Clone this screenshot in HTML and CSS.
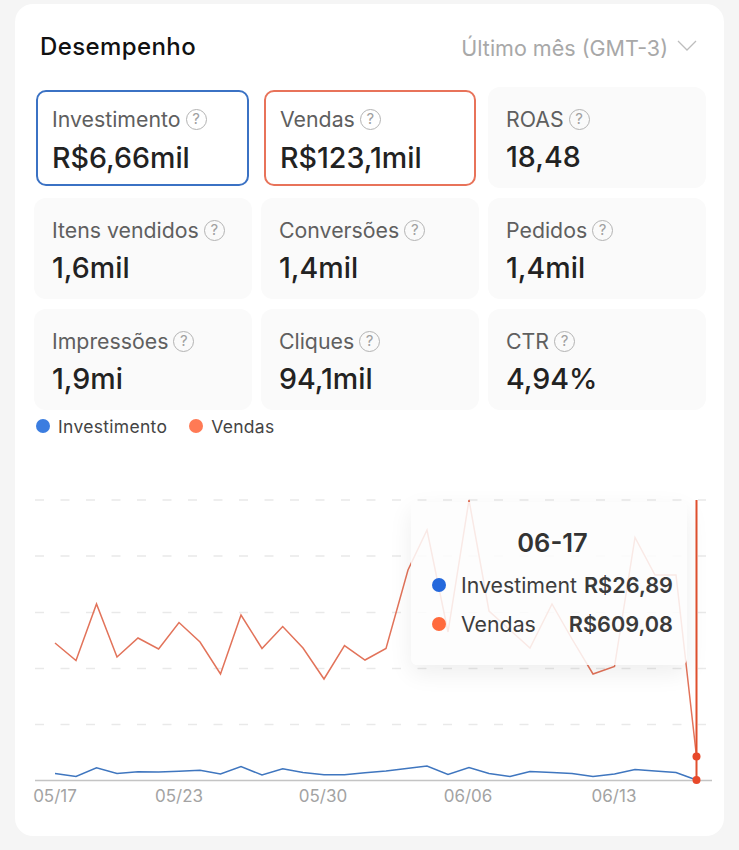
FILE: index.html
```html
<!DOCTYPE html>
<html lang="pt-BR">
<head>
    <meta charset="UTF-8">
    <meta name="viewport" content="width=device-width, initial-scale=1.0">
    <title>Desempenho</title>
    <link rel="stylesheet" href="styles.css">
</head>
<body>
    <main class="card">
        <header class="card-header">
            <h1 class="card-title">Desempenho</h1>
            <div class="range">
                <span>Último mês (GMT-3)</span>
                <svg class="chevron" width="20" height="11" viewBox="0 0 20 11"><path d="M1 1l9 9 9-9"/></svg>
            </div>
        </header>

        <!-- Metric tiles -->
        <section class="metrics">
            <div class="metric metric-blue">
                <div class="metric-label">Investimento <span class="help">?</span></div>
                <div class="metric-value">R$6,66mil</div>
            </div>
            <div class="metric metric-orange">
                <div class="metric-label">Vendas <span class="help">?</span></div>
                <div class="metric-value">R$123,1mil</div>
            </div>
            <div class="metric">
                <div class="metric-label">ROAS <span class="help">?</span></div>
                <div class="metric-value">18,48</div>
            </div>
            <div class="metric">
                <div class="metric-label">Itens vendidos <span class="help">?</span></div>
                <div class="metric-value">1,6mil</div>
            </div>
            <div class="metric">
                <div class="metric-label">Conversões <span class="help">?</span></div>
                <div class="metric-value">1,4mil</div>
            </div>
            <div class="metric">
                <div class="metric-label">Pedidos <span class="help">?</span></div>
                <div class="metric-value">1,4mil</div>
            </div>
            <div class="metric">
                <div class="metric-label">Impressões <span class="help">?</span></div>
                <div class="metric-value">1,9mi</div>
            </div>
            <div class="metric">
                <div class="metric-label">Cliques <span class="help">?</span></div>
                <div class="metric-value">94,1mil</div>
            </div>
            <div class="metric">
                <div class="metric-label">CTR <span class="help">?</span></div>
                <div class="metric-value">4,94%</div>
            </div>
        </section>

        <div class="legend">
            <span class="legend-item"><i class="dot dot-blue"></i>Investimento</span>
            <span class="legend-item"><i class="dot dot-orange"></i>Vendas</span>
        </div>

        <!-- Chart -->
        <div class="chart">
            <svg class="chart-svg" width="680" height="310" viewBox="34 490 680 310">
                <g class="grid">
                    <line x1="35" x2="706" y1="500" y2="500"/>
                    <line x1="35" x2="706" y1="556" y2="556"/>
                    <line x1="35" x2="706" y1="612.5" y2="612.5"/>
                    <line x1="35" x2="706" y1="668.5" y2="668.5"/>
                    <line x1="35" x2="706" y1="724.5" y2="724.5"/>
                </g>
                <line class="axis" x1="35" x2="712" y1="780.5" y2="780.5"/>
                <polyline class="line-orange" points="55,643 76,660.5 96.5,604 117,657 138,638 158.6,649 179,622.5 200,642 220.5,674 241,615 262,648.5 282.7,626.5 303,648 324,679 344.5,645.6 365,660 386,648.5 408,570 427,530 448,632 469,500 489,611 510,630 530,648 552,604 572,639 593,674 614.5,666.5 635,537.5 655,575 676,575 696.5,756.5"/>
                <polyline class="line-blue" points="55,773.5 76,776.5 96.5,767.7 117,773.5 138,771.7 158.6,772 179,771.3 200,770.3 220.5,774 241,766.5 262,775 282.7,768.7 303,772.5 324,774.7 344.5,774.7 365,772.7 386,771 406.5,768.5 427,766 448,774.5 469,767.5 489,773.5 510,776.5 530,771.5 552,772.5 572,773.5 593,776.5 614.5,774 635,769.5 655,771 676,772.5 696.5,780"/>
                <line class="cursor" x1="696.5" x2="696.5" y1="500" y2="780"/>
                <circle class="cursor-dot" cx="696.5" cy="756.5" r="4"/>
                <circle class="cursor-dot" cx="696.5" cy="780" r="4"/>
                <g class="ticks">
                    <text x="55" y="801.5">05/17</text>
                    <text x="179" y="801.5">05/23</text>
                    <text x="323" y="801.5">05/30</text>
                    <text x="468" y="801.5">06/06</text>
                    <text x="614" y="801.5">06/13</text>
                </g>
            </svg>

            <div class="tooltip">
                <div class="tooltip-title">06-17</div>
                <div class="tooltip-row">
                    <i class="dot dot-tip-blue"></i>
                    <span class="tooltip-name">Investiment</span>
                    <span class="tooltip-value">R$26,89</span>
                </div>
                <div class="tooltip-row">
                    <i class="dot dot-tip-orange"></i>
                    <span class="tooltip-name">Vendas</span>
                    <span class="tooltip-value">R$609,08</span>
                </div>
            </div>
        </div>
    </main>
</body>
</html>
```

FILE: styles.css
```css
body {
    font-family: Inter, "Liberation Sans", sans-serif;
    margin: 0;
    padding: 4px 15px 14px;
    background-color: #f5f5f5;
}
.card {
    height: 832px;
    box-sizing: border-box;
    padding: 0 18px 0 19px;
    background-color: #fff;
    border-radius: 18px;
}
.card-header {
    display: flex;
    justify-content: space-between;
    align-items: center;
    height: 83px;
    padding: 0 9px 0 6px;
}
.card-title {
    margin: 2px 0 0;
    font-size: 24px;
    font-weight: 500;
    letter-spacing: 0.4px;
    color: #111;
}
.range {
    display: flex;
    align-items: center;
    gap: 9px;
    padding-top: 5px;
    font-size: 21.5px;
    color: #a8a8a8;
}
.chevron {
    margin-top: -6px;
}
.chevron path {
    fill: none;
    stroke: #bdbdbd;
    stroke-width: 1.3;
}
/* Metric tiles */
.metrics {
    display: grid;
    grid-template-columns: repeat(3, 218px);
    grid-auto-rows: 101px;
    column-gap: 9px;
    row-gap: 10px;
}
.metric {
    box-sizing: border-box;
    padding: 19px 18px 0;
    background-color: #fafafa;
    border-radius: 12px;
}
.metric-blue,
.metric-orange {
    padding: 14px 14px 0;
    background-color: #fff;
    border: 2px solid #3b72c4;
    border-radius: 10px;
}
.metric-blue {
    margin: 3px 3px 2px 2px;
}
.metric-orange {
    margin: 3px 3px 2px 3px;
    border-color: #e8735a;
}
.metric-blue .metric-value,
.metric-orange .metric-value {
    margin-top: 9px;
}
.metric-label {
    display: flex;
    align-items: center;
    gap: 5px;
    height: 26px;
    font-size: 21.3px;
    color: #5f5f5f;
}
.help {
    display: inline-block;
    box-sizing: border-box;
    width: 21px;
    height: 21px;
    border: 1.5px solid #b3b3b3;
    border-radius: 50%;
    font-size: 15px;
    line-height: 18px;
    text-align: center;
    color: #a0a0a0;
}
.metric-value {
    margin-top: 8px;
    font-size: 28.6px;
    font-weight: 500;
    line-height: 34px;
    color: #222;
}
/* Legend */
.legend {
    display: flex;
    gap: 22px;
    height: 80px;
    padding: 6px 0 0 2px;
    box-sizing: border-box;
}
.legend-item {
    display: flex;
    align-items: center;
    height: 20px;
    font-size: 17.5px;
    letter-spacing: 0.3px;
    color: #444;
}
.dot {
    display: inline-block;
    flex: none;
    width: 14px;
    height: 14px;
    border-radius: 50%;
}
.legend-item .dot {
    margin-right: 8px;
}
.dot-blue {
    background-color: #3b7de0;
}
.dot-orange {
    background-color: #ff7a55;
}
.dot-tip-blue {
    background-color: #2468dc;
}
.dot-tip-orange {
    background-color: #ff6a3d;
}
/* Chart */
.chart {
    position: relative;
    width: 680px;
    height: 310px;
}
.chart-svg {
    display: block;
    overflow: visible;
}
.grid line {
    stroke: #e9e9e9;
    stroke-width: 1.5;
    stroke-dasharray: 9 16.5;
}
.axis {
    stroke: #c4c4c4;
    stroke-width: 1.5;
}
.line-orange,
.line-blue {
    fill: none;
    stroke-width: 1.5;
}
.line-orange {
    stroke: #e2735a;
}
.line-blue {
    stroke: #3f76bf;
}
.cursor {
    stroke: #e0502e;
    stroke-width: 2;
}
.cursor-dot {
    fill: #e8492a;
}
.ticks text {
    font-size: 17px;
    fill: #a3a3a3;
    text-anchor: middle;
}
/* Tooltip over the chart */
.tooltip {
    position: absolute;
    left: 377px;
    top: 12px;
    box-sizing: border-box;
    width: 276px;
    height: 163px;
    padding: 26px 14px 0 21px;
    background-color: rgba(253, 253, 253, 0.86);
    border-radius: 6px;
    box-shadow: 0 8px 24px rgba(0, 0, 0, 0.07);
}
.tooltip-title {
    margin-bottom: 7px;
    font-size: 25.5px;
    font-weight: 600;
    line-height: 30px;
    text-align: center;
    color: #333;
}
.tooltip-row {
    display: flex;
    align-items: center;
    height: 39px;
    font-size: 21.3px;
    color: #3d3d3d;
}
.tooltip-name {
    margin-left: 15px;
}
.tooltip-value {
    margin-left: auto;
    font-size: 21.7px;
    font-weight: 600;
    color: #3a3a3a;
}
```
